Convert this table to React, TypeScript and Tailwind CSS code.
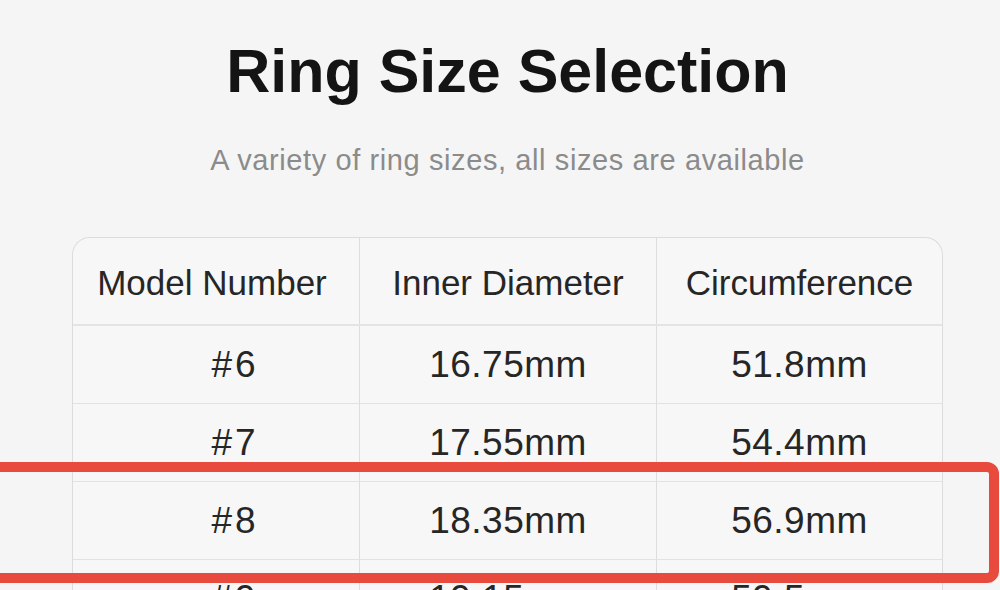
import React from "react";

const rows = [
  ["#6", "16.75mm", "51.8mm"],
  ["#7", "17.55mm", "54.4mm"],
  ["#8", "18.35mm", "56.9mm"],
  ["#9", "19.15mm", "59.5mm"],
];

export default function App() {
  return (
    <div
      className="relative h-[590px] w-[1000px] overflow-hidden bg-[#f5f5f5]"
      style={{ fontFamily: '"Liberation Sans", Arial, sans-serif' }}
    >
      <div className="ml-[72px] flex w-[871px] flex-col items-center">
        <h1 className="mt-[41px] text-[61px] font-bold leading-none text-[#141414]">
          Ring Size Selection
        </h1>
        <p className="mt-[44px] text-[29px] leading-none tracking-[0.6px] text-[#8b8b8b]">
          A variety of ring sizes, all sizes are available
        </p>
        <div className="mt-[62px] w-full rounded-t-[18px] border-[1.5px] border-b-0 border-[#dcdcdc] bg-[#f7f7f7] text-[#262626]">
          <div className="grid h-[88px] grid-cols-[286px_297px_1fr] border-b-2 border-[#e4e4e4]">
            <div className="flex items-center justify-center pr-[8px] pt-[5px] text-[35px]">Model Number</div>
            <div className="flex items-center justify-center border-l border-[#dddddd] pt-[5px] text-[35px]">
              Inner Diameter
            </div>
            <div className="flex items-center justify-center border-l border-[#dddddd] pt-[5px] text-[35px]">
              Circumference
            </div>
          </div>
          {rows.map((r) => (
            <div
              key={r[0]}
              className="grid h-[78px] grid-cols-[286px_297px_1fr] border-b-[1.5px] border-[#e2e2e2] text-[37px]"
            >
              <div className="flex items-center justify-center pl-[38px] tracking-[3px]">{r[0]}</div>
              <div className="flex items-center justify-center border-l border-[#dddddd] tracking-[0.5px]">
                {r[1]}
              </div>
              <div className="flex items-center justify-center border-l border-[#dddddd] tracking-[0.5px]">
                {r[2]}
              </div>
            </div>
          ))}
        </div>
      </div>
      <div className="absolute left-[-20px] top-[462px] h-[121px] w-[1019px] rounded-[12px] border-[10px] border-[#e84b3e]" />
    </div>
  );
}
